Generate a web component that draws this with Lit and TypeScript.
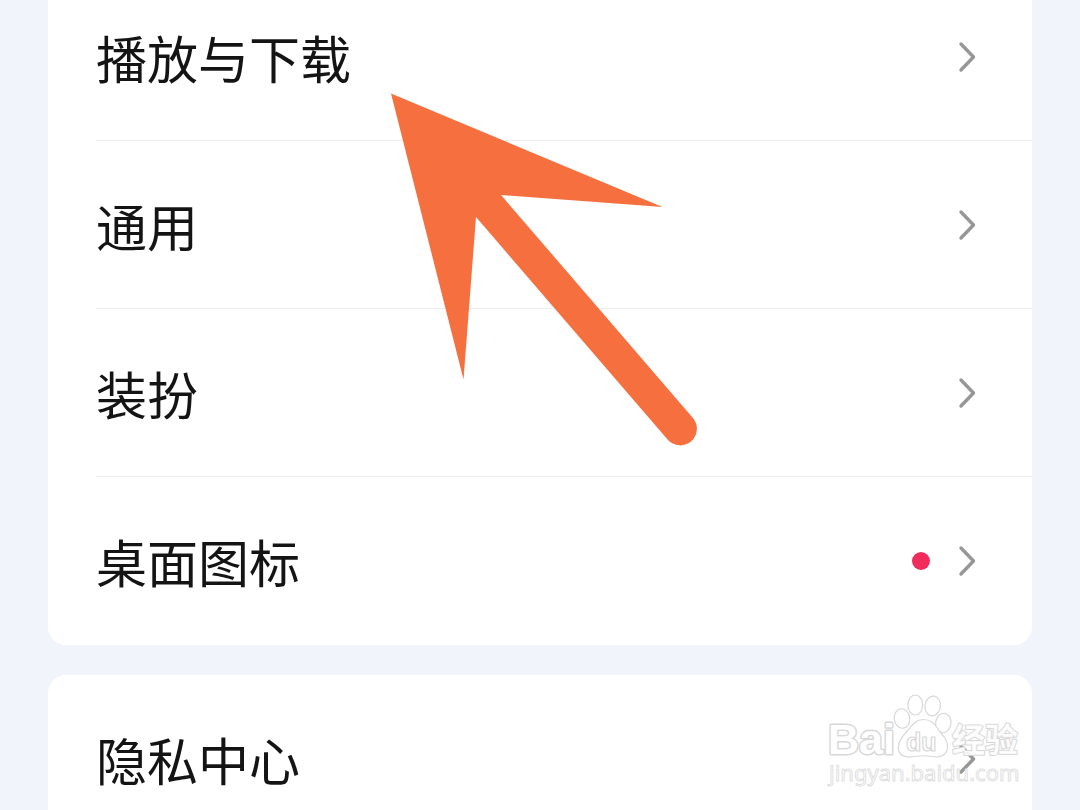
import { LitElement, html, css } from "lit";
import { customElement, property } from "lit/decorators.js";

interface Entry {
  label: string;
  dot?: boolean;
}

const GROUPS: Entry[][] = [
  [
    { label: "播放与下载" },
    { label: "通用" },
    { label: "装扮" },
    { label: "桌面图标", dot: true },
  ],
  [{ label: "隐私中心" }],
];

@customElement("settings-row")
class SettingsRow extends LitElement {
  @property() label = "";
  @property({ type: Boolean }) dot = false;

  static styles = css`
    :host {
      display: block;
    }
    .row {
      box-sizing: border-box;
      display: flex;
      align-items: center;
      gap: 28px;
      width: 100%;
      height: 168px;
      margin: 0;
      padding: 0 56px 0 0;
      border: 0;
      background: none;
      color: #141414;
      font: inherit;
      text-align: left;
      cursor: pointer;
    }
    .label {
      flex: 1;
    }
    .dot {
      width: 18px;
      height: 18px;
      border-radius: 50%;
      background: #f12c5d;
    }
    .chevron {
      display: block;
      width: 18px;
      height: 32px;
      fill: none;
      stroke: #979797;
      stroke-width: 3.4;
      stroke-linecap: round;
      stroke-linejoin: round;
    }
  `;

  render() {
    return html`
      <button class="row" type="button">
        <span class="label">${this.label}</span>
        ${this.dot ? html`<span class="dot"></span>` : null}
        <svg class="chevron" viewBox="0 0 18 32" aria-hidden="true">
          <path d="M3 3 L15.500 16 L3 29" />
        </svg>
      </button>
    `;
  }
}

@customElement("baidu-mark")
class BaiduMark extends LitElement {
  static styles = css`
    :host {
      display: block;
    }
    .mark {
      display: block;
      width: 100%;
      fill: #fff;
      stroke: #d8d8d8;
      stroke-width: 1.2;
      stroke-linejoin: round;
    }
    .latin {
      font: bold 43px "Liberation Sans", sans-serif;
      paint-order: stroke;
      stroke-width: 3;
    }
    .du {
      font: bold 25px "Liberation Sans", sans-serif;
    }
    .han {
      font: bold 33px "Noto Sans CJK SC", sans-serif;
      fill-opacity: 0.9;
      paint-order: stroke;
      stroke-width: 2;
    }
    .site {
      font: 22px "Noto Sans", sans-serif;
      fill-opacity: 0.5;
      stroke: #dfdfdf;
      stroke-width: 1;
    }
  `;

  render() {
    return html`
      <svg class="mark" viewBox="0 0 200 104">
        <text class="latin" x="2" y="62">Bai</text>
        <ellipse cx="76" cy="26.5" rx="7.7" ry="9.8" transform="rotate(-8 76 26.5)" />
        <ellipse cx="89.3" cy="13" rx="7.4" ry="10" />
        <ellipse cx="106.7" cy="14" rx="7.7" ry="10" transform="rotate(8 106.7 14)" />
        <ellipse cx="117.3" cy="31" rx="7.7" ry="9.8" transform="rotate(8 117.3 31)" />
        <path
          d="M97 27.5 C89 27.5 85 35 79.5 41 C74 47 71 52 72.5 58 C74 65 82 66 88 64.500 C94 63.500 100 63.500 106 64.500 C113 66 120.500 64 121.500 56 C122.500 48 116 43 112 37 C108 31 105 27.500 97 27.500 Z"
        />
        <text class="du" x="80" y="59">du</text>
        <text class="han" x="126" y="60">经验</text>
        <text class="site" x="3" y="89">jingyan.baidu.com</text>
      </svg>
    `;
  }
}

@customElement("app-root")
class AppRoot extends LitElement {
  static styles = css`
    :host {
      display: block;
    }
    .page {
      position: relative;
      box-sizing: border-box;
      height: 100vh;
      padding: 0 48px;
      overflow: hidden;
      background: #f1f4fa;
      font: 51px/72px "Noto Sans CJK SC", sans-serif;
    }
    .groups {
      display: flex;
      flex-direction: column;
      gap: 30px;
      margin-top: -27px;
    }
    .group {
      margin: 0;
      padding: 0 0 0 48px;
      list-style: none;
      border-radius: 18px;
      background: #fff;
    }
    .item + .item {
      box-shadow: 0 -1px 0 #ededed;
    }
    .pointer {
      position: absolute;
      top: 90px;
      left: 388px;
      width: 312px;
      height: 360px;
      fill: #f6703f;
      pointer-events: none;
    }
    .watermark {
      position: absolute;
      right: 54px;
      bottom: 14px;
      width: 200px;
      pointer-events: none;
    }
  `;

  render() {
    return html`
      <main class="page">
        <div class="groups">
          ${GROUPS.map(
            (group) => html`
              <ul class="group">
                ${group.map(
                  (entry) => html`
                    <li class="item">
                      <settings-row .label=${entry.label} .dot=${!!entry.dot}></settings-row>
                    </li>
                  `
                )}
              </ul>
            `
          )}
        </div>
        <svg class="pointer" viewBox="388 90 312 360" aria-hidden="true">
          <path
            d="M391 93.5 L662.5 207 L501 195 L692.500 417.500 A16.5 16.5 0 0 1 668 440 L476 217 L463.5 379.5 Z"
          />
        </svg>
        <baidu-mark class="watermark"></baidu-mark>
      </main>
    `;
  }
}
